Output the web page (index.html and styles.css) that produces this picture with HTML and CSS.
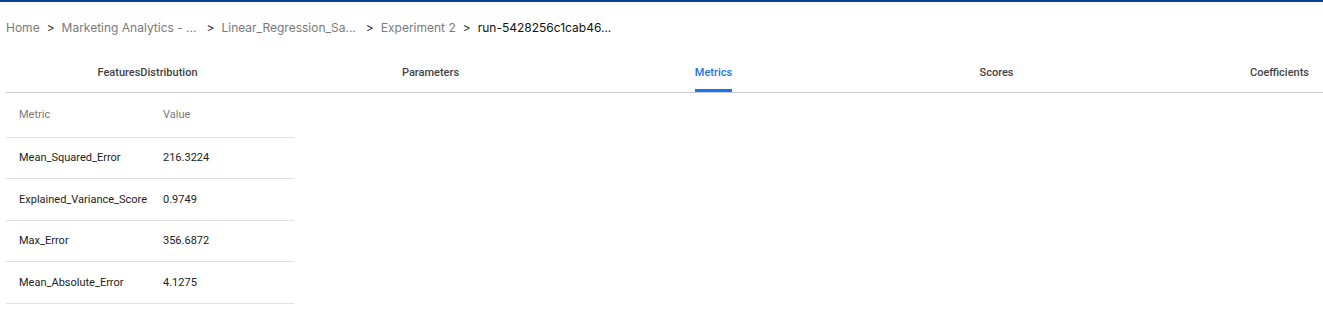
FILE: index.html
```html
<html>
	<head>
		<title>Run Details</title>
		<link rel="stylesheet" href="styles.css">
	</head>
	<body>
		<div class="topbar"></div>
		<div class="page">
			<div class="crumbs">
				<span class="crumb">Home</span>
				<span class="sep">&gt;</span>
				<span class="crumb trunc">Marketing Analytics - ...</span>
				<span class="sep">&gt;</span>
				<span class="crumb trunc">Linear_Regression_Sa...</span>
				<span class="sep">&gt;</span>
				<span class="crumb">Experiment 2</span>
				<span class="sep">&gt;</span>
				<span class="crumb current">run-5428256c1cab46...</span>
			</div>

			<div class="tabsWrap">
				<div class="tabs">
					<div class="tab"><span>FeaturesDistribution</span></div>
					<div class="tab"><span>Parameters</span></div>
					<div class="tab active"><span>Metrics</span></div>
					<div class="tab"><span>Scores</span></div>
					<div class="tab"><span>Coefficients</span></div>
				</div>
			</div>

			<table class="metrics">
				<thead>
					<tr><th class="name">Metric</th><th>Value</th></tr>
				</thead>
				<tbody>
					<tr><td class="name">Mean_Squared_Error</td><td>216.3224</td></tr>
					<tr><td class="name">Explained_Variance_Score</td><td>0.9749</td></tr>
					<tr><td class="name">Max_Error</td><td>356.6872</td></tr>
					<tr><td class="name">Mean_Absolute_Error</td><td>4.1275</td></tr>
				</tbody>
			</table>
		</div>
	</body>
</html>
```

FILE: styles.css
```css
body {
    margin: 0;
    font-family: Roboto, "Liberation Sans", sans-serif;
    background: #fff;
    overflow: hidden;
}
.topbar {
    height: 2px;
    background: #0b3f94;
}
.page {
    padding: 0 0 0 6px;
}
.crumbs {
    display: flex;
    align-items: center;
    height: 50px;
    padding-bottom: 4px;
    font-family: Inter, Roboto, sans-serif;
    font-size: 12px;
    color: #7a7a7a;
    white-space: nowrap;
}
.sep {
    color: #333;
    margin: 0 7px;
}
.crumbs .trunc {
    margin-right: 3px;
}
.crumb.current {
    color: #111;
}
.tabsWrap {
    border-bottom: 1px solid #cbc9d6;
    overflow: hidden;
}
.tabs {
    display: flex;
    width: 1415px;
}
.tab {
    flex: none;
    width: 283px;
    height: 36px;
    display: flex;
    justify-content: center;
    font-size: 11px;
    font-weight: 500;
    color: #444;
}
.tab span {
    display: block;
    padding-top: 10px;
    height: 26px;
    box-sizing: content-box;
}
.tab.active span {
    color: #1a73e8;
    border-bottom: 3px solid #1a73e8;
    border-radius: 2px 2px 0 0;
    height: 23px;
}
.metrics {
    border-collapse: collapse;
    width: 288px;
    font-size: 11px;
    color: #222;
}
.metrics th,
.metrics td {
    text-align: left;
    padding: 0 0 0 13px;
    border-bottom: 1px solid #e0e0e0;
    height: 41.5px;
    white-space: nowrap;
}
.metrics th {
    font-weight: 400;
    color: #7a7a7a;
    height: 44px;
}
.metrics td.name,
.metrics th.name {
    width: 143px;
}
.metrics td + td, .metrics th + th {
    padding-left: 1px;
}
```
